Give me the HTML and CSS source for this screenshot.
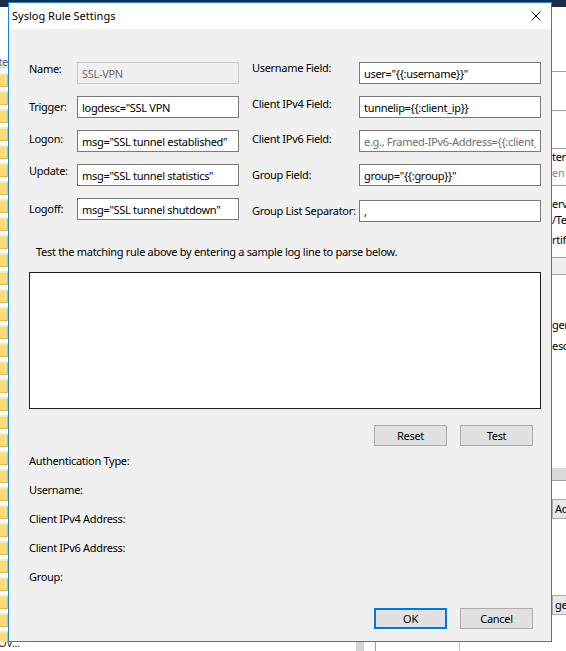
FILE: index.html
```html
<!DOCTYPE html>
<html>

<head>
    <meta charset="UTF-8">
    <title>Syslog Rule Settings</title>
    <link rel="stylesheet" href="styles.css">
</head>

<body>
    <div class="desktop">
        <div class="topband"></div>
        <div class="behind">
            <div class="pane-left">
                <div class="lp-head">te</div>
                <div class="folder"></div>
                <div class="folder"></div>
                <div class="folder"></div>
                <div class="folder"></div>
                <div class="folder"></div>
                <div class="folder"></div>
                <div class="folder"></div>
                <div class="folder"></div>
                <div class="folder"></div>
                <div class="folder"></div>
                <div class="folder"></div>
                <div class="folder"></div>
                <div class="folder"></div>
                <div class="folder"></div>
                <div class="folder"></div>
                <div class="folder"></div>
                <div class="folder"></div>
                <div class="folder"></div>
                <div class="folder"></div>
                <div class="folder"></div>
                <div class="folder"></div>
                <div class="folder"></div>
                <div class="folder"></div>
                <div class="folder"></div>
                <div class="folder"></div>
                <div class="folder"></div>
                <div class="folder"></div>
                <div class="folder"></div>
                <div class="folder"></div>
                <div class="folder"></div>
                <div class="folder"></div>
                <div class="folder"></div>
            </div>
            <div class="pane-mid"></div>
            <div class="pane-right">
                <div class="rp-gap" style="height:64px"></div>
                <div class="rp-line"></div>
                <div class="rp-gap" style="height:38px"></div>
                <div class="rp-line"></div>
                <div class="rp-gap" style="height:37px"></div>
                <div class="rp-line"></div>
                <div class="rp-text">ter</div>
                <div class="rp-text grey">en</div>
                <div class="rp-gap" style="height:4px"></div>
                <div class="rp-line"></div>
                <div class="rp-gap" style="height:10px"></div>
                <div class="rp-text">erv</div>
                <div class="rp-text">/Te</div>
                <div class="rp-gap" style="height:4px"></div>
                <div class="rp-text">rtifi</div>
                <div class="rp-gap" style="height:9px"></div>
                <div class="rp-line"></div>
                <div class="rp-band"></div>
                <div class="rp-line"></div>
                <div class="rp-gap" style="height:42px"></div>
                <div class="rp-text">ger</div>
                <div class="rp-gap" style="height:5px"></div>
                <div class="rp-text">esc</div>
                <div class="rp-gap" style="height:114px"></div>
                <div class="rp-band dark"></div>
                <div class="rp-line"></div>
                <div class="rp-gap" style="height:18px"></div>
                <div class="rp-btn">Ad</div>
                <div class="rp-gap" style="height:76px"></div>
                <div class="rp-btn">ge</div>
            </div>
        </div>
        <div class="bottomrow">
            <span class="ov">OV...</span>
            <span class="bb-grey"></span>
            <span class="bb-line"></span>
            <span class="bb-line2"></span>
        </div>
    </div>

    <div class="dialog">
        <div class="titlebar">
            <span class="title">Syslog Rule Settings</span>
            <svg class="close" width="10" height="10" viewBox="0 0 10 10">
                <path d="M0.5 0.5 L9.5 9.5 M9.5 0.5 L0.5 9.5" stroke="#000" stroke-width="1" fill="none" />
            </svg>
        </div>
        <div class="content">
            <div class="form">
                <label class="lbl up4">Name:</label>
                <input class="field disabled" type="text" value="SSL-VPN" disabled>
                <label class="lbl lbl-r up5">Username Field:</label>
                <input class="field" type="text" value='user="{{:username}}"'>

                <label class="lbl">Trigger:</label>
                <input class="field" type="text" value='logdesc="SSL VPN'>
                <label class="lbl lbl-r up3">Client IPv4 Field:</label>
                <input class="field" type="text" value="tunnelip={{:client_ip}}">

                <label class="lbl up2">Logon:</label>
                <input class="field" type="text" value='msg="SSL tunnel established"'>
                <label class="lbl lbl-r up2">Client IPv6 Field:</label>
                <input class="field" type="text" placeholder="e.g., Framed-IPv6-Address={{:client_ip}}">

                <label class="lbl up4">Update:</label>
                <input class="field" type="text" value='msg="SSL tunnel statistics"'>
                <label class="lbl lbl-r">Group Field:</label>
                <input class="field" type="text" value='group="{{:group}}"'>

                <label class="lbl">Logoff:</label>
                <input class="field" type="text" value='msg="SSL tunnel shutdown"'>
                <label class="lbl lbl-r dn2">Group List Separator:</label>
                <input class="field sep" type="text" value=",">
            </div>

            <p class="hint">Test the matching rule above by entering a sample log line to parse below.</p>

            <textarea class="sample"></textarea>

            <div class="btnrow">
                <button class="btn">Reset</button>
                <button class="btn">Test</button>
            </div>

            <ul class="results">
                <li>Authentication Type:</li>
                <li>Username:</li>
                <li>Client IPv4 Address:</li>
                <li>Client IPv6 Address:</li>
                <li>Group:</li>
            </ul>

            <div class="btnrow bottom">
                <button class="btn default">OK</button>
                <button class="btn">Cancel</button>
            </div>
        </div>
    </div>
</body>

</html>
```

FILE: styles.css
```css
* {
    padding: 0;
    margin: 0;
    box-sizing: border-box;
}

html,
body {
    width: 566px;
    height: 651px;
    overflow: hidden;
}

body {
    position: relative;
    background: #fff;
    font-family: "Noto Sans", "Liberation Sans", sans-serif;
    font-size: 11px;
    letter-spacing: -0.3px;
    color: #000;
}

ul {
    list-style: none;
}

/* ---- the window behind ---- */

.desktop {
    width: 566px;
    height: 651px;
    display: flex;
    flex-direction: column;
}

.topband {
    height: 7px;
    background: #1b2c45;
}

.behind {
    height: 635px;
    display: flex;
}

.pane-left {
    width: 8px;
    overflow: hidden;
    padding-top: 48px;
}

.lp-head {
    height: 13px;
    line-height: 13px;
    color: #555;
    text-align: right;
    white-space: nowrap;
    direction: rtl;
    border-bottom: 1px solid #d0d0d0;
    margin-bottom: 5px;
}

.folder {
    height: 14px;
    margin-bottom: 4px;
    background: #fbdc7c;
    border-top: 2px solid #fdeaa8;
    border-bottom: 1px solid #e3b94a;
    border-right: 1px solid #e3b94a;
}

.pane-mid {
    flex: 1;
}

.pane-right {
    width: 14px;
    overflow: hidden;
    display: flex;
    flex-direction: column;
}

.rp-line {
    height: 1px;
    background: #a0a0a0;
    flex-shrink: 0;
}

.rp-gap {
    flex-shrink: 0;
}

.rp-text {
    height: 16px;
    line-height: 16px;
    white-space: nowrap;
    flex-shrink: 0;
}

.rp-text.grey {
    color: #8a8a8a;
}

.rp-band {
    height: 16px;
    background: #f0f0f0;
    flex-shrink: 0;
}

.rp-band.dark {
    height: 12px;
    background: #d9d9d9;
}

.rp-btn {
    height: 20px;
    line-height: 18px;
    padding-left: 2px;
    border: 1px solid #adadad;
    border-right: 0;
    background: #e8e8e8;
    flex-shrink: 0;
    white-space: nowrap;
}

.bottomrow {
    height: 9px;
    position: relative;
    overflow: hidden;
}

.ov {
    position: absolute;
    left: -2px;
    top: -6px;
    line-height: 14px;
    color: #333;
}

.bb-grey {
    position: absolute;
    left: 356px;
    top: 0;
    width: 8px;
    height: 9px;
    background: #d4d4d4;
}

.bb-line {
    position: absolute;
    left: 375px;
    top: 0;
    width: 1px;
    height: 9px;
    background: #a0a0a0;
}

.bb-line2 {
    position: absolute;
    left: 459px;
    top: 0;
    width: 1px;
    height: 9px;
    background: #c8c8c8;
}

/* ---- dialog ---- */

.dialog {
    position: absolute;
    left: 8px;
    top: 2px;
    width: 544px;
    height: 640px;
    border: 1px solid #1883d7;
    background: #f0f0f0;
    display: flex;
    flex-direction: column;
}

.titlebar {
    height: 26px;
    background: #fff;
    display: flex;
    align-items: center;
    justify-content: space-between;
    padding: 0 10px 0 3px;
    flex-shrink: 0;
}

.title {
    line-height: 16px;
    letter-spacing: 0;
}

.close {
    display: block;
}

.content {
    padding: 33px 10px 0 20px;
}

.form {
    display: grid;
    grid-template-columns: 48px 162px 120px 182px;
    grid-auto-rows: 22px;
    row-gap: 12px;
    align-items: center;
}

.lbl {
    color: #000;
    line-height: 16px;
    white-space: nowrap;
    position: relative;
    top: 0;
}

.lbl.up2 {
    top: -2px;
}

.lbl.up3 {
    top: -3px;
}

.lbl.up4 {
    top: -4px;
}

.lbl.up5 {
    top: -5px;
}

.lbl.dn2 {
    top: 2px;
}

.lbl-r {
    padding-left: 13px;
}

.field {
    width: 100%;
    height: 22px;
    border: 1px solid #7a7a7a;
    background: #fff;
    font-family: inherit;
    font-size: 11px;
    letter-spacing: -0.3px;
    color: #000;
    padding: 0 4px;
    outline: none;
}

.field::placeholder {
    color: #6d6d6d;
}

.field.disabled {
    background: #f0f0f0;
    border-color: #cccccc;
    color: #6d6d6d;
}

.field.sep {
    position: relative;
    top: 2px;
}

.hint {
    margin-top: 24px;
    padding-left: 7px;
    line-height: 16px;
}

.sample {
    display: block;
    margin-top: 12px;
    width: 512px;
    height: 137px;
    border: 1px solid #1e1e1e;
    background: #fff;
    resize: none;
    outline: none;
}

.btnrow {
    display: flex;
    justify-content: flex-end;
    gap: 13px;
    padding-right: 8px;
    margin-top: 16px;
}

.btn {
    width: 73px;
    height: 21px;
    border: 1px solid #adadad;
    background: #e1e1e1;
    font-family: inherit;
    font-size: 11px;
    letter-spacing: -0.3px;
    color: #000;
}

.btn.default {
    border: 2px solid #0078d7;
}

.results {
    margin-top: 0;
}

.results li {
    height: 29px;
    line-height: 30px;
}

.btnrow.bottom {
    margin-top: 17px;
}
```
